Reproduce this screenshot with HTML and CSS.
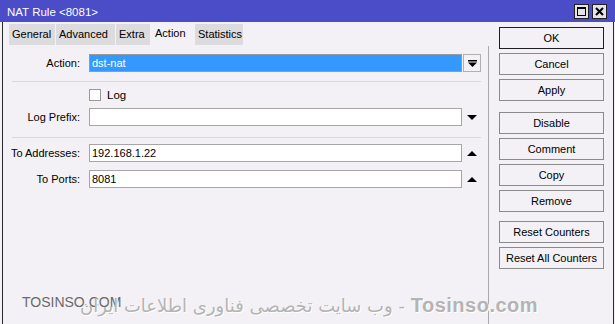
FILE: index.html
```html
<!DOCTYPE html>
<html>
<head>
<meta charset="utf-8">
<link rel="stylesheet" href="styles.css">
</head>
<body>
<div class="titlebar">
  <span class="title">NAT Rule &lt;8081&gt;</span>
  <div class="controls">
    <span class="ctl"><svg width="13" height="13" viewBox="0 0 13 13"><rect x="2.5" y="2.5" width="8" height="8" fill="none" stroke="#000" stroke-width="1"/><rect x="2" y="2" width="9" height="2" fill="#000"/></svg></span>
    <span class="ctl"><svg width="13" height="13" viewBox="0 0 13 13"><path d="M3 3 L10 10 M10 3 L3 10" stroke="#000" stroke-width="2"/></svg></span>
  </div>
</div>
<div class="body">
  <div class="main">
    <div class="tabs">
      <span class="tab t1">General</span>
      <span class="tab t2">Advanced</span>
      <span class="tab t3">Extra</span>
      <span class="tab t4 active">Action</span>
      <span class="tab t5">Statistics</span>
    </div>
    <div class="form">
      <div class="row r-action">
        <span class="label">Action:</span>
        <span class="field selected">dst-nat</span>
        <span class="dropbtn"><svg width="9" height="7" viewBox="0 0 9 7"><rect x="0" y="0" width="9" height="1.5" fill="#000"/><path d="M0 2.5 H9 L4.5 7 Z" fill="#000"/></svg></span>
      </div>
      <div class="sep s1"></div>
      <div class="row r-log">
        <span class="label"></span>
        <span class="check"></span>
        <span class="checklabel">Log</span>
      </div>
      <div class="row r-prefix">
        <span class="label">Log Prefix:</span>
        <span class="field"></span>
        <span class="arrow"><span class="tri down"></span></span>
      </div>
      <div class="sep s2"></div>
      <div class="row r-addr">
        <span class="label">To Addresses:</span>
        <span class="field">192.168.1.22</span>
        <span class="arrow"><span class="tri up"></span></span>
      </div>
      <div class="row r-ports">
        <span class="label">To Ports:</span>
        <span class="field">8081</span>
        <span class="arrow"><span class="tri up"></span></span>
      </div>
    </div>
  </div>
  <div class="side">
    <button class="btn default">OK</button>
    <button class="btn">Cancel</button>
    <button class="btn">Apply</button>
    <button class="btn g2">Disable</button>
    <button class="btn">Comment</button>
    <button class="btn">Copy</button>
    <button class="btn">Remove</button>
    <button class="btn g3">Reset Counters</button>
    <button class="btn">Reset All Counters</button>
  </div>
</div>
<div class="wm-en">TOSINSO.COM</div>
<div class="wm-fa">وب سایت تخصصی فناوری اطلاعات ایران - <span class="wm-site">Tosinso.com</span></div>
</body>
</html>
```
FILE: styles.css
```css
html, body {
  margin: 0;
  padding: 0;
}
body {
  width: 615px;
  height: 324px;
  overflow: hidden;
  background: #f3f1f5;
  font-family: "Liberation Sans", Arial, sans-serif;
  font-size: 11px;
  color: #000;
  position: relative;
}
.titlebar {
  height: 22px;
  background: #4a4cc8;
  display: flex;
  align-items: center;
  justify-content: space-between;
  padding-left: 7px;
  box-sizing: border-box;
}
.title {
  color: #fff;
  font-size: 11.5px;
  margin-top: 1px;
}
.controls {
  display: flex;
  gap: 3px;
  margin-right: 8px;
  margin-top: 1px;
}
.ctl {
  width: 13px;
  height: 13px;
  background: #e4e4e8;
  border: 1px solid #222;
  display: flex;
}
.body {
  display: flex;
  height: 302px;
  margin-left: 2px;
  border-left: 1px solid #2a2a2a;
  width: 610px;
  border-right: 1px solid #2a2a2a;
}
.main {
  width: 486px;
  display: flex;
  flex-direction: column;
}
.tabs {
  display: flex;
  align-items: flex-start;
  padding-left: 6px;
  margin-top: 2px;
  height: 22px;
  gap: 1px;
}
.tab {
  height: 21px;
  line-height: 21px;
  padding-left: 3px;
  box-sizing: border-box;
  background: #dcdbdd;
  white-space: nowrap;
}
.t1 { width: 46px; }
.t2 { width: 59px; }
.t3 { width: 34px; }
.t4 { width: 43px; }
.t5 { width: 48px; }
.tab.active {
  background: #f3f1f5;
  height: 23px;
  margin-top: -1px;
  line-height: 20px;
  padding-left: 4px;
}
.form {
  flex: 1;
  border-right: 1px solid #a9a9a9;
  width: 486px;
  box-sizing: border-box;
}
.row {
  display: flex;
  align-items: center;
  height: 18px;
}
.label {
  width: 77px;
  text-align: right;
  flex: none;
  margin-right: 9px;
  white-space: nowrap;
}
.field {
  width: 373px;
  height: 18px;
  box-sizing: border-box;
  border: 1px solid #a6a6a6;
  background: #fff;
  padding-left: 2px;
  line-height: 16px;
  flex: none;
}
.field.selected {
  background: #3399ff;
  color: #fff;
  border-color: #9a9a9a;
}
.dropbtn {
  width: 18px;
  height: 18px;
  box-sizing: border-box;
  border: 1px solid #b0b0b0;
  margin-left: 1px;
  display: flex;
  align-items: center;
  justify-content: center;
}
.arrow {
  width: 18px;
  margin-left: 1px;
  display: flex;
  justify-content: center;
}
.tri {
  width: 0;
  height: 0;
  border-left: 5px solid transparent;
  border-right: 5px solid transparent;
}
.tri.down { border-top: 5px solid #000; }
.tri.up { border-bottom: 5px solid #000; }
.r-action { margin-top: 8px; }
.sep {
  height: 1px;
  background: #dad8dc;
  margin-left: 9px;
  width: 469px;
}
.s1 { margin-top: 9px; }
.r-log { margin-top: 7px; height: 12px; }
.check {
  width: 12px;
  height: 12px;
  box-sizing: border-box;
  border: 1px solid #9a9a9a;
  background: #fff;
  flex: none;
}
.checklabel { margin-left: 6px; font-size: 11.5px; }
.r-prefix { margin-top: 7px; }
.s2 { margin-top: 11px; }
.r-addr { margin-top: 6px; }
.r-ports { margin-top: 8px; }
.side {
  display: flex;
  flex-direction: column;
  padding-left: 10px;
  padding-top: 5px;
  gap: 4px;
}
.btn {
  width: 105px;
  height: 22px;
  margin: 0;
  padding: 0;
  background: #f3f1f5;
  border: 1px solid #8a8a8a;
  font-family: inherit;
  font-size: 11px;
  color: #000;
  white-space: nowrap;
}
.btn.default { border-color: #1e1e1e; }
.btn.g2 { margin-top: 7px; }
.btn.g3 { margin-top: 5px; }
.wm-en {
  position: absolute;
  left: 22px;
  top: 294px;
  font-family: "Liberation Sans", Arial, sans-serif;
  font-size: 14px;
  color: #6a6a6a;
}
.wm-fa {
  position: absolute;
  left: 80px;
  top: 294px;
  font-family: "DejaVu Sans", sans-serif;
  font-size: 18px;
  color: #b4b4b4;
  white-space: nowrap;
  text-shadow: 1px 1px 0 #ffffff;
}
.wm-site {
  font-family: "Liberation Sans", Arial, sans-serif;
  font-size: 20px;
  font-weight: bold;
  letter-spacing: 0.5px;
}
```
